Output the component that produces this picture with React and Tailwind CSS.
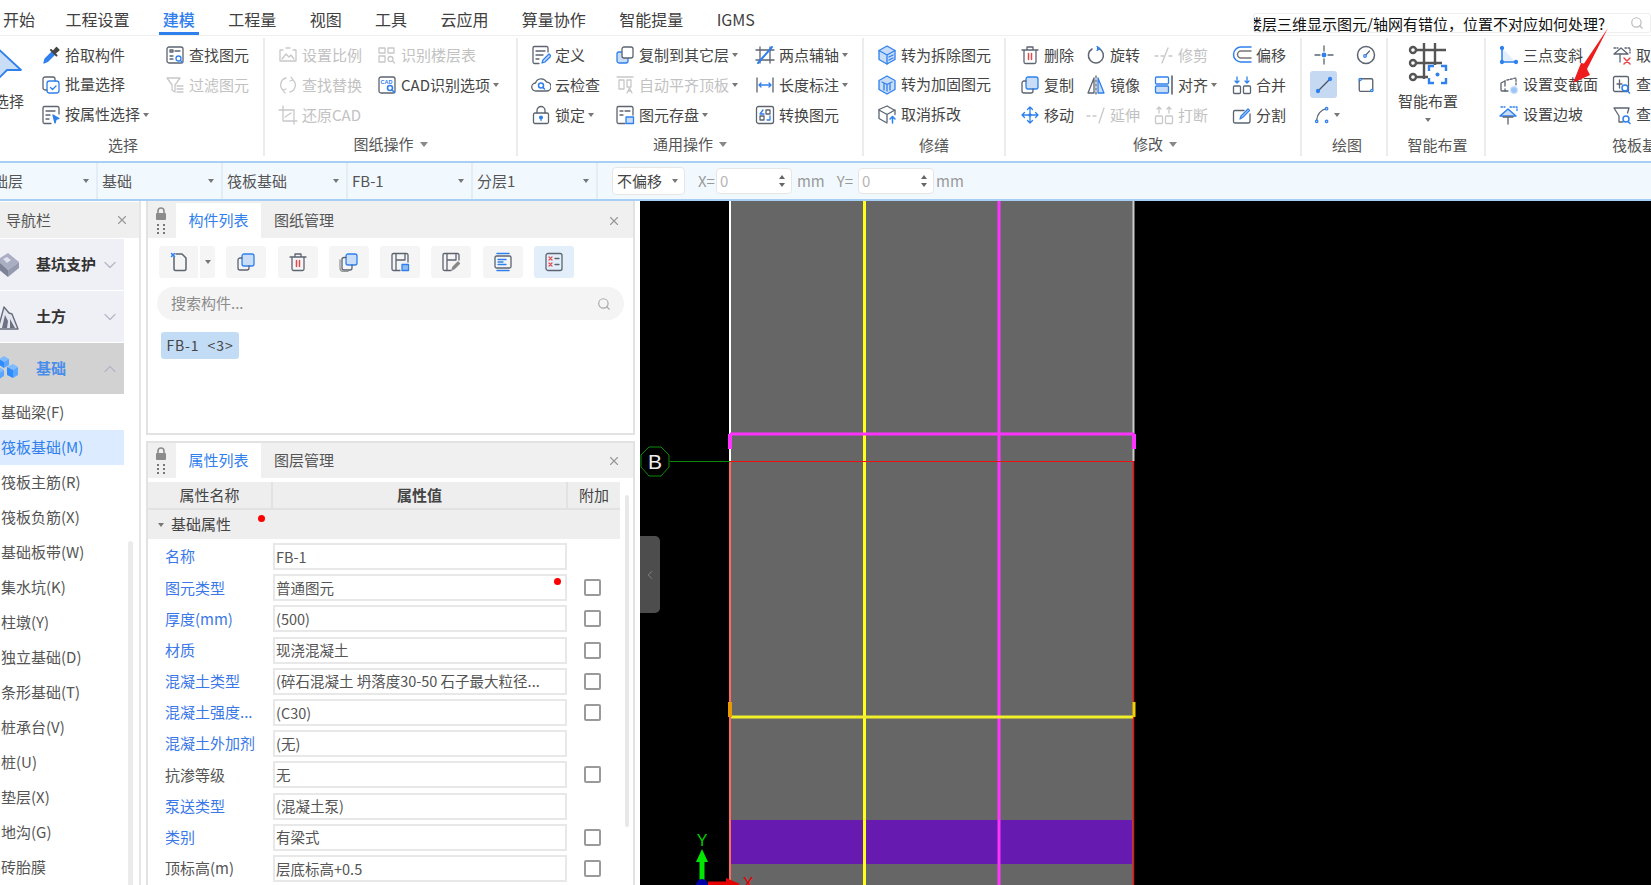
import React from "react";
import { ChevronDown, ChevronLeft, ChevronUp, Search, X } from "lucide-react";

const B = "#2f80ed";
const L = "#c9ddf6";

const Svg = ({ size = 20, children, className = "" }) => (
  <svg width={size} height={size} viewBox="0 0 20 20" fill="none" stroke="currentColor" strokeWidth="1.3" strokeLinecap="round" strokeLinejoin="round" className={`shrink-0 ${className}`}>
    {children}
  </svg>
);

const icons = {
  pick: <><path d="M3 18l1-4 7-7 2.500 2.500-7 7z" fill={B} stroke={B} /><path d="M10 5l5.500 5.500" strokeWidth="2" stroke="#444" /><path d="M12.500 6l3-3.500 2.500 2.500-3.500 3z" fill="#444" stroke="#444" /></>,
  batch: <><path d="M6 15H4a2 2 0 0 1-2-2V4a2 2 0 0 1 2-2h8a2 2 0 0 1 2 2v2" /><rect x="6" y="6" width="12" height="12" rx="2.500" stroke={B} /><path d="M9.500 12.500l2 2 3.500-3.500" stroke={B} /></>,
  attr: <><path d="M18 9V3a1.500 1.500 0 0 0-1.500-1.500h-13A1.500 1.500 0 0 0 2 3v14a1.500 1.500 0 0 0 1.500 1.500H10" /><path d="M5 6h9M5 10h4M5 14h3" /><path d="M12 10l6 3.500-3 1-1 3.500z" fill={B} stroke={B} /></>,
  find: <><rect x="2" y="2" width="16" height="16" rx="2" /><path d="M10 6h5M5 11h3M5 14h3" /><rect x="5" y="5" width="3" height="2" /><circle cx="13.500" cy="13.500" r="2.500" stroke={B} /><path d="M15.500 15.500l2 2" stroke={B} /></>,
  filter: <><path d="M2 3h13l-5 7v7l-3-2v-5z" /><path d="M12 11h6M12 14h6M12 17h6" /></>,
  scale: <><path d="M2 5h3M8 3h4M15 5h3M2 5v11M18 5v11M2 16h16" /><path d="M4 14l4-5 3 3 2-2 3 4" /></>,
  floor: <><path d="M2 3h6v5H2zM11 3h6v5h-6zM2 11h6v6H2z" /><circle cx="13.500" cy="14" r="2.500" /><path d="M15.500 16l2 2" /></>,
  swap: <><path d="M8 3a7 7 0 0 0-3 12" /><path d="M12 17a7 7 0 0 0 3-12" /><path d="M13 2l2 3-3 1M7 18l-2-3 3-1" /></>,
  cad: <><rect x="2" y="2" width="16" height="16" rx="2" /><text x="3.500" y="9" fontSize="5.500" fontWeight="700" fill={B} stroke="none" fontFamily="Liberation Sans">CAD</text><circle cx="13" cy="13" r="2.500" stroke={B} strokeWidth="1.600" /><path d="M15 15l2.500 2.500" stroke={B} strokeWidth="1.600" /></>,
  crop: <><path d="M5 1v15h14M1 5h15v14" /><path d="M7 12l6-4" /></>,
  define: <><path d="M17 7V3a1.500 1.500 0 0 0-1.500-1.500h-12A1.500 1.500 0 0 0 2 3v14a1.500 1.500 0 0 0 1.500 1.500H8" /><path d="M5 6h9M5 10h7M5 14h3" /><path d="M11 18l1-3 6-6 2 2-6 6z" stroke={B} fill={L} /></>,
  cloud: <><path d="M5 16a4 4 0 0 1-.500-8 6 6 0 0 1 11-1 4.500 4.500 0 0 1 0 9z" /><circle cx="10" cy="10.500" r="2.500" stroke={B} strokeWidth="1.500" /><path d="M12 12.500l1.500 1.500" stroke={B} strokeWidth="1.500" /></>,
  lock: <><rect x="2.500" y="8" width="15" height="10.500" rx="1.500" /><path d="M6 8V5.500a4 4 0 0 1 8 0V8" /><circle cx="10" cy="12.500" r="1.400" fill={B} stroke={B} /><path d="M10 13v2.500" stroke={B} /></>,
  copyTo: <><rect x="2" y="7" width="11" height="11" rx="2" fill={L} stroke={B} /><rect x="7" y="2" width="11" height="11" rx="2" fill="#fff" /></>,
  auto: <><path d="M2 2h16M4 5h5v9H4zM12 5h4v7h-4z" /><path d="M12 18l2.500-5 2.500 5M13 16h3" /></>,
  save: <><path d="M18 10V3a1.500 1.500 0 0 0-1.500-1.500h-13A1.500 1.500 0 0 0 2 3v14a1.500 1.500 0 0 0 1.500 1.500H10" /><path d="M5 6h3M10 6h5M5 10h3" /><rect x="11" y="12" width="7.500" height="6.500" fill={L} stroke={B} /></>,
  two: <><path d="M5 2v16M15 2v16M1 5h18M1 15h18" /><path d="M3 18L17 2" stroke={B} strokeWidth="2" /></>,
  length: <><path d="M2 3v14M18 3v14" /><path d="M4 10h12M6 8l-2 2 2 2M14 8l2 2-2 2" stroke={B} /></>,
  convert: <><rect x="1.500" y="1.500" width="17" height="17" rx="2" /><path d="M11 5h4v4h-4zM5 11h4v4H5z" /><path d="M15 11v4h-3" stroke={B} /><path d="M8 5L5 9h4" stroke={B} /></>,
  demo: <><path d="M10 1l8 4.500v9L10 19l-8-4.500v-9z" stroke={B} fill={L} /><path d="M10 10V19M10 10L2 5.500M10 10l8-4.500" stroke={B} /><path d="M12 12l4-2M12 15l4-2" stroke={B} /></>,
  reinf: <><path d="M10 1l8 4.500v9L10 19l-8-4.500v-9z" stroke={B} fill={L} /><path d="M5 7l5 2.500L15 7M10 9.500V16M7 9v6M13 9v6" stroke={B} /></>,
  undo: <><path d="M10 18l-8-4.500v-9L10 1l8 4.500v4" /><path d="M2 5l8 4.500 8-4.500M10 9.500V17" /><path d="M13 14l2.500-2.500L18 14M15.500 12v6" stroke={B} strokeWidth="1.500" /></>,
  trash: <><path d="M2 5h16M7 5V2h6v3M4 5v12a1.500 1.500 0 0 0 1.500 1.500h9A1.500 1.500 0 0 0 16 17V5" /><path d="M8.500 8.500v6M11.500 8.500v6" stroke="#e5484d" strokeWidth="1.500" /></>,
  copy: <><rect x="6" y="2" width="12" height="12" rx="2" fill={L} stroke={B} /><path d="M6 6H4a2 2 0 0 0-2 2v8a2 2 0 0 0 2 2h7a2 2 0 0 0 2-2v-2" /></>,
  move: <g stroke={B}><path d="M10 2v16M2 10h16M7.500 4.500L10 2l2.500 2.500M7.500 15.500L10 18l2.500-2.500M4.500 7.500L2 10l2.500 2.500M15.500 7.500L18 10l-2.500 2.500" /><circle cx="10" cy="10" r="1" fill={B} /></g>,
  rotate: <><path d="M13 3.600A7.500 7.500 0 1 1 6 4" strokeWidth="1.500" /><path d="M11 1.500l3 2-3 2" stroke={B} fill={B} /></>,
  mirror: <><path d="M8 3L2 18h6z" /><path d="M12 3l6 15h-6z" stroke={B} fill={L} /><path d="M10 1v18" strokeDasharray="2 2" /></>,
  trim: <><path d="M1 11h3M7 11h3M15 11h3" /><path d="M14 3l-6 15" /></>,
  extend: <><path d="M1 11h3M7 11h3" /><path d="M18 3l-5 15" /></>,
  align: <><rect x="1.500" y="2" width="13" height="7" rx="1" stroke={B} /><rect x="1.500" y="11" width="13" height="7" rx="1" stroke={B} fill={L} /><path d="M18 1v18" strokeWidth="1.600" /></>,
  offset: <g stroke={B} strokeWidth="1.500"><path d="M19 2H9a7 7 0 0 0 0 15h10" /><path d="M19 6H9a3.500 3.500 0 0 0 0 7h10" stroke="#777" /></g>,
  merge: <><rect x="1.500" y="11" width="7" height="7.500" rx="1" /><rect x="11.500" y="11" width="7" height="7.500" rx="1" /><path d="M5 2v6M3 6l2 2 2-2M15 2v6M13 6l2 2 2-2" stroke={B} /></>,
  brk: <><rect x="1.500" y="11" width="7" height="7.500" rx="1" /><rect x="11.500" y="11" width="7" height="7.500" rx="1" /><path d="M5 8V2M3 4l2-2 2 2M15 8V2M13 4l2-2 2 2" /></>,
  split: <><path d="M18 9v7a2 2 0 0 1-2 2H3a1.500 1.500 0 0 1-1.500-1.500V7A1.500 1.500 0 0 1 3 5.500h9" /><path d="M8 14l1-3 7-7 1.500 1.500-7 7z" stroke={B} fill={L} /></>,
  point: <><path d="M10 1v5M10 14v5M1 10h5M14 10h5" /><circle cx="10" cy="10" r="1.800" fill={B} stroke={B} /></>,
  circle: <><circle cx="10" cy="10" r="8.500" strokeWidth="1.500" /><path d="M9 11l4.500-5" strokeWidth="1.200" /><circle cx="9" cy="11" r="1.300" fill="#fff" stroke={B} /></>,
  line: <g stroke={B}><path d="M4.500 15.500l11-11" strokeWidth="1.400" stroke="#4a5568" /><circle cx="4" cy="16" r="1.500" fill={B} /><circle cx="16" cy="4" r="1.500" fill={B} /></g>,
  rect: <><rect x="2.500" y="3" width="15" height="14" rx="1.500" strokeWidth="1.500" /><circle cx="3.500" cy="4" r="1.300" fill={L} stroke={B} /><circle cx="16.500" cy="16" r="1.300" fill={L} stroke={B} /></>,
  arc: <><path d="M3 17C3 9 8 4 14 3" /><circle cx="3" cy="17" r="1.400" fill={L} stroke={B} /><circle cx="14" cy="3" r="1.400" fill={L} stroke={B} /><circle cx="14" cy="17" r="1.400" fill={L} stroke={B} /></>,
  three: <><path d="M3 17V3l14 14z" fill="#e3effc" stroke="none" /><path d="M3 3v14h14" stroke={B} strokeWidth="1.500" /><circle cx="3" cy="3" r="1.500" fill={B} stroke={B} /><circle cx="3" cy="17" r="1.500" fill={B} stroke={B} /><circle cx="17" cy="17" r="1.500" fill={B} stroke={B} /></>,
  variable: <><path d="M9 16H3a1 1 0 0 1-1-1V8l4-2" /><path d="M6 6v5M6 14v2" /><path d="M8 5l9-2v7" strokeDasharray="2 1.500" /><circle cx="15" cy="15" r="3.500" fill="#9cc4f5" stroke="#cfe2fa" /></>,
  slope: <><path d="M1 11L9 4l8 7z" stroke={B} fill={L} strokeWidth="1.500" /><path d="M4 12h10M9 12v7" /><path d="M2 2h4M11 2h7v5" strokeDasharray="1.500 1.500" stroke={B} /></>,
  cancelTop: <><path d="M2 9l7-6 7 6z" /><path d="M2 3h4M13 3h5v5" strokeDasharray="1.500 1.500" /><path d="M8 9v8" /><path d="M12 13l6 6M18 13l-6 6" stroke="#e5484d" strokeWidth="1.500" /></>,
  query: <><rect x="1.500" y="1.500" width="15" height="15" rx="1.500" /><path d="M5 9h5M7.500 5v8" /><circle cx="13" cy="13" r="3" stroke={B} strokeWidth="1.500" /><path d="M15 15.500l2.500 2.500" stroke={B} strokeWidth="1.500" /></>,
  queryF: <><path d="M2 3h15l-1.500 5M2 3l5 8v6h4" /><circle cx="14" cy="14" r="3" stroke={B} strokeWidth="1.500" /><path d="M16 16.500l2 2" stroke={B} strokeWidth="1.500" /></>,
  newDoc: <><path d="M5 5v12a1.500 1.500 0 0 0 1.500 1.500h9A1.500 1.500 0 0 0 17 17V6l-4-4H7" strokeWidth="1.500" /><path d="M2.500 1.500l3 3M5.500 1.500l-3 3" stroke={B} strokeWidth="1.500" /></>,
  copy2: <><rect x="7" y="2" width="11" height="11" rx="2" fill={L} stroke={B} /><path d="M7 5.500H5a2 2 0 0 0-2 2V16a2 2 0 0 0 2 2h6a2 2 0 0 0 2-2v-3" /><path d="M1 8v8a3.500 3.500 0 0 0 3 3.500h5" stroke="#999" /></>,
  saveDoc: <><path d="M18 10V3a1.500 1.500 0 0 0-1.500-1.500h-13A1.500 1.500 0 0 0 2 3v14a1.500 1.500 0 0 0 1.500 1.500H10" /><path d="M6 2v16M15 2v6M6 8h9" /><rect x="12" y="12.500" width="6.500" height="6" fill="#8dbcf5" stroke={B} /></>,
  editDoc: <><path d="M18 8V3a1.500 1.500 0 0 0-1.500-1.500h-13A1.500 1.500 0 0 0 2 3v14a1.500 1.500 0 0 0 1.500 1.500H10" /><path d="M6 2v16M15 2v6M6 8h9" /><path d="M11 18l1-3 5-5 1.500 1.500-5 5z" fill="#888" stroke="#888" /></>,
  listBox: <><path d="M4 1.500h12M4 18.500h12" stroke={B} strokeWidth="1.500" /><rect x="2" y="4" width="16" height="12" rx="1.500" /><path d="M5 7.500h8M5 10h5M5 12.500h8" stroke={B} /></>,
  xList: <><rect x="2" y="1.500" width="16" height="17" rx="2" /><path d="M5 5l3 3M8 5l-3 3M5 11l3 3M8 11l-3 3" stroke="#e5484d" strokeWidth="1.200" /><path d="M11 6.500h4M11 12.500h4" /></>,
};

const Caret = ({ className = "ml-[6px]" }) => (
  <span className={`inline-block w-0 h-0 border-x-[3px] border-x-transparent border-t-[4px] border-t-[#777] shrink-0 ${className}`} />
);

const Item = ({ icon, label, off, caret, iconW = 20 }) => (
  <div className={`h-[30px] flex items-center gap-[4px] whitespace-nowrap ${off ? "text-[#c2c2c2]" : "text-[#454545]"}`}>
    <Svg className={off ? "text-[#c8c8c8]" : "text-[#5c6470]"} size={iconW}>{icons[icon]}</Svg>
    <span>{label}</span>
    {caret && <Caret className="-ml-px" />}
  </div>
);

const Col = ({ w, items }) => (
  <div className={`flex flex-col shrink-0 ${w}`}>
    {items.map((it) => (
      <Item key={it.label} {...it} />
    ))}
  </div>
);

const Group = ({ w, label, caret, pad = "", labelPos = "justify-center", children, last }) => (
  <div className={`h-[118px] mt-[2px] pt-[2px] shrink-0 flex flex-col ${w} ${last ? "" : "border-r-2 border-[#ececec]"}`}>
    <div className={`flex h-[92px] overflow-hidden ${pad}`}>{children}</div>
    <div className={`flex-1 flex items-center text-[#555] ${caret ? "" : "pt-[4px]"} ${labelPos}`}>
      <span className="whitespace-nowrap">{label}</span>
      {caret && <span className="ml-[6px] w-0 h-0 border-x-[4px] border-x-transparent border-t-[5px] border-t-[#888]" />}
    </div>
  </div>
);

const tabs = ["开始", "工程设置", "建模", "工程量", "视图", "工具", "云应用", "算量协作", "智能提量", "IGMS"];

const Ribbon = () => (
  <div className="flex h-[125px] overflow-hidden text-[15px]">
    <Group w="w-[265px]" label="选择" labelPos="justify-start pl-[108px]">
      <div className="w-[41px] shrink-0 relative">
        <svg width="26" height="40" viewBox="0 0 26 40" className="mt-[7px] overflow-visible">
          <path d="M-8 -4L21 23H7L-3 33z" fill={L} stroke={B} strokeWidth="1.800" strokeLinejoin="round" />
        </svg>
        <span className="absolute left-[-6px] top-[50px] text-[#454545] whitespace-nowrap">选择</span>
      </div>
      <Col w="w-[124px]" items={[{ icon: "pick", label: "拾取构件" }, { icon: "batch", label: "批量选择" }, { icon: "attr", label: "按属性选择", caret: true }]} />
      <Col w="w-[95px]" items={[{ icon: "find", label: "查找图元" }, { icon: "filter", label: "过滤图元", off: true }]} />
    </Group>
    <Group w="w-[253px]" label="图纸操作" caret pad="pl-[13px]">
      <Col w="w-[99px]" items={[{ icon: "scale", label: "设置比例", off: true }, { icon: "swap", label: "查找替换", off: true }, { icon: "crop", label: "还原CAD", off: true }]} />
      <Col w="w-[135px]" items={[{ icon: "floor", label: "识别楼层表", off: true }, { icon: "cad", label: "CAD识别选项", caret: true }]} />
    </Group>
    <Group w="w-[346px]" label="通用操作" caret pad="pl-[13px]">
      <Col w="w-[84px]" items={[{ icon: "define", label: "定义" }, { icon: "cloud", label: "云检查" }, { icon: "lock", label: "锁定", caret: true }]} />
      <Col w="w-[140px]" items={[{ icon: "copyTo", label: "复制到其它层", caret: true }, { icon: "auto", label: "自动平齐顶板", off: true, caret: true }, { icon: "save", label: "图元存盘", caret: true }]} />
      <Col w="w-[105px]" items={[{ icon: "two", label: "两点辅轴", caret: true }, { icon: "length", label: "长度标注", caret: true }, { icon: "convert", label: "转换图元" }]} />
    </Group>
    <Group w="w-[142px]" label="修缮" pad="pl-[13px]">
      <Col w="w-[125px]" items={[{ icon: "demo", label: "转为拆除图元" }, { icon: "reinf", label: "转为加固图元" }, { icon: "undo", label: "取消拆改" }]} />
    </Group>
    <Group w="w-[296px]" label="修改" caret pad="pl-[14px]" labelPos="justify-center pl-[4px]">
      <Col w="w-[66px]" items={[{ icon: "trash", label: "删除" }, { icon: "copy", label: "复制" }, { icon: "move", label: "移动" }]} />
      <Col w="w-[68px]" items={[{ icon: "rotate", label: "旋转" }, { icon: "mirror", label: "镜像" }, { icon: "extend", label: "延伸", off: true }]} />
      <Col w="w-[78px]" items={[{ icon: "trim", label: "修剪", off: true }, { icon: "align", label: "对齐", caret: true }, { icon: "brk", label: "打断", off: true }]} />
      <Col w="w-[60px]" items={[{ icon: "offset", label: "偏移" }, { icon: "merge", label: "合并" }, { icon: "split", label: "分割" }]} />
    </Group>
    <Group w="w-[86px]" label="绘图" pad="pl-[8px]" labelPos="justify-center pl-[6px]">
      <div className="flex flex-col w-[42px] text-[#5c6470]">
        <div className="w-[27px] h-[30px] flex items-center justify-center"><Svg>{icons.point}</Svg></div>
        <div className="w-[27px] h-[27px] my-[1.500px] rounded-[3px] bg-[#c5daf2] flex items-center justify-center"><Svg>{icons.line}</Svg></div>
        <div className="w-[27px] h-[30px] flex items-center justify-center gap-[2px]"><Svg size={18}>{icons.arc}</Svg><Caret className="-mr-[6px]" /></div>
      </div>
      <div className="flex flex-col w-[27px] text-[#5c6470]">
        <div className="w-[27px] h-[30px] flex items-center justify-center"><Svg>{icons.circle}</Svg></div>
        <div className="w-[27px] h-[30px] flex items-center justify-center"><Svg size={18}>{icons.rect}</Svg></div>
      </div>
    </Group>
    <Group w="w-[98px]" label="智能布置" labelPos="justify-center pl-[3px]">
      <div className="w-full pr-[16px] flex flex-col items-center text-[#454545]">
        <svg width="40" height="42" viewBox="0 0 40 42" fill="none" className="mt-[3px] shrink-0">
          <g stroke="#555" strokeWidth="2.400">
            <path d="M8 7h30M8 20h26M8 34h12M16 0v36M27 0v22" />
            <circle cx="5" cy="7" r="3" fill="#fff" />
            <circle cx="5" cy="20" r="3" fill="#fff" />
            <circle cx="5" cy="34" r="3" fill="#fff" />
          </g>
          <path d="M21 28v-5h5M33 23h5v5M38 35v5h-5M26 40h-5v-5" stroke={B} strokeWidth="2.400" />
          <circle cx="29.500" cy="31.500" r="2" fill={B} />
        </svg>
        <span className="mt-[5px] leading-[22px] whitespace-nowrap">智能布置</span>
        <Caret className="mt-[6px]" />
      </div>
    </Group>
    <Group w="w-[165px]" label="筏板基础" pad="pl-[13px]" labelPos="justify-start pl-[126px]" last>
      <Col w="w-[113px]" items={[{ icon: "three", label: "三点变斜" }, { icon: "variable", label: "设置变截面" }, { icon: "slope", label: "设置边坡" }]} />
      <Col w="w-[60px]" items={[{ icon: "cancelTop", label: "取消" }, { icon: "query", label: "查询" }, { icon: "queryF", label: "查询" }]} />
    </Group>
  </div>
);

const Cell = ({ w, children, clip }) => (
  <div className={`h-full flex items-center justify-between pl-[4px] pr-[7px] border-r-2 border-[#e3edf5] whitespace-nowrap ${w} ${clip ? "overflow-hidden" : ""}`}>
    <span>{children}</span>
    <Caret className="" />
  </div>
);

const Spin = () => (
  <div className="h-[26px] w-[76px] rounded-[4px] bg-white border border-[#e6e6e6] flex items-center justify-between pl-[3px] pr-[6px] text-[#b5b5b5]">
    <span>0</span>
    <span className="flex flex-col gap-[4px]">
      <span className="w-0 h-0 border-x-[3px] border-x-transparent border-b-[4px] border-b-[#666]" />
      <span className="w-0 h-0 border-x-[3px] border-x-transparent border-t-[4px] border-t-[#666]" />
    </span>
  </div>
);

const OptionBar = () => (
  <div className="h-[40px] flex items-center bg-[#f2f9fe] border-y-2 border-[#a6cff3] text-[15px] text-[#555]">
    <Cell w="w-[98px] -indent-[26px]" clip>基础层</Cell>
    <Cell w="w-[125px]">基础</Cell>
    <Cell w="w-[125px]">筏板基础</Cell>
    <Cell w="w-[125px]">FB-1</Cell>
    <Cell w="w-[125px]">分层1</Cell>
    <div className="h-[28px] w-[73px] ml-[14px] rounded-[4px] bg-white border border-[#e6e6e6] flex items-center justify-between pl-[4px] pr-[6px] text-[#444]">
      <span>不偏移</span>
      <Caret className="" />
    </div>
    <span className="ml-[13px] mr-[1px] text-[#999]">X=</span>
    <Spin />
    <span className="ml-[5px] text-[#999]">mm</span>
    <span className="ml-[12px] mr-[5px] text-[#999]">Y=</span>
    <Spin />
    <span className="ml-[2px] text-[#999]">mm</span>
  </div>
);

const NavIcon = ({ kind }) => {
  if (kind === "pit")
    return (
      <svg width="20" height="30" viewBox="0 0 20 30" className="shrink-0">
        <path d="M-3 10L8 3l11 9-11 8z" fill="#a9aec2" />
        <path d="M-3 10v8l11 9v-7z" fill="#7d8296" />
        <path d="M19 12v6l-11 9v-7z" fill="#959ab0" />
        <path d="M3 9l4-2 4 3-4 3z" fill="#dfe2ea" />
      </svg>
    );
  if (kind === "earth")
    return (
      <svg width="20" height="28" viewBox="0 0 20 28" className="shrink-0">
        <path d="M-2 26L4 4l5 6 3 1 6 15z" fill="#e4e6ee" stroke="#676c7e" strokeWidth="1.400" strokeLinejoin="round" />
        <path d="M2 25l3-13 3 6-1 7M10 25l0-9 5 9" fill="#6b7082" />
      </svg>
    );
  return (
    <svg width="20" height="30" viewBox="0 0 20 30" className="shrink-0">
      <path d="M-1 5l5-3 5 3-5 3z" fill="#7dbaff" /><path d="M-1 5v6l5 3V8z" fill="#2f8cff" /><path d="M9 5v6l-5 3V8z" fill="#5aa6ff" />
      <path d="M-6 16l5-3 5 3-5 3z" fill="#7dbaff" /><path d="M-6 16v6l5 3v-6z" fill="#2f8cff" /><path d="M4 16v6l-5 3v-6z" fill="#5aa6ff" />
      <path d="M7 13l6-3 5 3-5 3z" fill="#7dbaff" /><path d="M7 13v8l6 3v-8z" fill="#2f8cff" /><path d="M18 13v8l-5 3v-8z" fill="#5aa6ff" />
    </svg>
  );
};

const navList = ["基础梁(F)", "筏板基础(M)", "筏板主筋(R)", "筏板负筋(X)", "基础板带(W)", "集水坑(K)", "柱墩(Y)", "独立基础(D)", "条形基础(T)", "桩承台(V)", "桩(U)", "垫层(X)", "地沟(G)", "砖胎膜"];

const NavGroup = ({ kind, label, open }) => {
  const Chev = open ? ChevronUp : ChevronDown;
  return (
    <div className={`h-[51px] flex items-center ${open ? "bg-[#d2d2d2] text-[#4a8eea]" : "bg-[#eff0f5]"}`}>
      <NavIcon kind={kind} />
      <span className="ml-[16px] whitespace-nowrap">{label}</span>
      <Chev size={20} strokeWidth={1.5} className="text-[#b4b8c6] ml-auto mr-[4px] shrink-0" />
    </div>
  );
};

const Nav = () => (
  <div className="w-[141px] shrink-0 border-r-2 border-[#e6e6e6] flex flex-col h-full overflow-hidden text-[15px] text-[#555]">
    <div className="h-[36px] mt-px bg-[#efefef] flex items-center justify-between pl-[6px] pr-[10px]">
      <span>导航栏</span>
      <X size={14} className="text-[#999]" />
    </div>
    <div className="mt-px w-[124px] flex flex-col gap-px text-[#333] font-bold">
      <NavGroup kind="pit" label="基坑支护" />
      <NavGroup kind="earth" label="土方" />
      <NavGroup kind="found" label="基础" open />
    </div>
    <div className="relative pt-[1px]">
      {navList.map((n, i) => (
        <div key={n} className={`h-[35px] w-[124px] flex items-center pl-[1px] whitespace-nowrap ${i === 1 ? "bg-[#dcebff] text-[#2f80ed]" : ""}`}>
          {n}
        </div>
      ))}
      <div className="absolute left-[128px] top-[147px] w-[5px] h-[400px] bg-[#ebebeb] rounded" />
    </div>
  </div>
);

const Lock = () => (
  <svg width="14" height="30" viewBox="0 0 14 30" className="shrink-0">
    <path d="M4 7V5a3 3 0 0 1 6 0v2" fill="none" stroke="#8b8b8b" strokeWidth="1.600" />
    <rect x="2" y="7" width="10" height="7" rx="1" fill="#8b8b8b" />
    <g fill="#777">
      <rect x="3" y="18" width="2" height="2" /><rect x="9" y="18" width="2" height="2" />
      <rect x="3" y="22" width="2" height="2" /><rect x="9" y="22" width="2" height="2" />
      <rect x="3" y="26" width="2" height="2" /><rect x="9" y="26" width="2" height="2" />
    </g>
  </svg>
);

const PanelHead = ({ a, b, top }) => (
  <div className={`bg-[#f0f0f1] flex items-stretch pl-[6px] pr-[12px] text-[15px] shrink-0 ${top ? "h-[37px] pt-[2px]" : "h-[35px]"}`}>
    <div className="flex items-center w-[22px]"><Lock /></div>
    <div className="bg-white flex items-center justify-center w-[85px] text-[#2f80ed]">{a}</div>
    <div className="flex items-center ml-[13px] text-[#555]">{b}</div>
    <X size={14} className="ml-auto self-center text-[#999]" />
  </div>
);

const tools = ["copy", "trash", "copy2", "saveDoc", "editDoc", "listBox", "xList"];

const rows = [
  { k: "名称", v: "FB-1", blue: true, nocb: true },
  { k: "图元类型", v: "普通图元", blue: true, dot: true },
  { k: "厚度(mm)", v: "(500)", blue: true },
  { k: "材质", v: "现浇混凝土", blue: true },
  { k: "混凝土类型", v: "(碎石混凝土 坍落度30-50 石子最大粒径...", blue: true },
  { k: "混凝土强度...", v: "(C30)", blue: true },
  { k: "混凝土外加剂", v: "(无)", blue: true, nocb: true },
  { k: "抗渗等级", v: "无" },
  { k: "泵送类型", v: "(混凝土泵)", blue: true, nocb: true },
  { k: "类别", v: "有梁式", blue: true },
  { k: "顶标高(m)", v: "层底标高+0.5" },
];

const Panels = () => (
  <div className="w-[489px] shrink-0 ml-[5px] flex flex-col h-full">
    <div className="h-[234px] shrink-0 border-2 border-t-0 border-[#e2e2e2] flex flex-col">
      <PanelHead a="构件列表" b="图纸管理" top />
      <div className="flex gap-[11.250px] pl-[11px] pt-[8px] text-[#5c6470]">
        <div className="w-[56px] h-[32px] bg-[#f5f5f5] rounded-[3px] flex items-center">
          <div className="w-[41px] flex justify-center border-r-2 border-white h-full items-center"><Svg>{icons.newDoc}</Svg></div>
          <Caret className="ml-[5px]" />
        </div>
        {tools.map((t, i) => (
          <div key={t} className={`w-[40px] h-[32px] rounded-[3px] flex items-center justify-center ${i === 6 ? "bg-[#e3eefb]" : "bg-[#f5f5f5]"}`}>
            <Svg>{icons[t]}</Svg>
          </div>
        ))}
      </div>
      <div className="mx-[9px] mt-[9px] h-[33px] rounded-full bg-[#f4f4f4] flex items-center justify-between pl-[14px] pr-[13px] text-[15px] text-[#8c8c8c]">
        <span>搜索构件...</span>
        <Search size={14} className="text-[#aaa]" />
      </div>
      <div className="ml-[13px] mt-[12px] w-[78px] h-[27px] rounded-[3px] bg-[#c3dcf5] flex items-center justify-center text-[14px] text-[#444] tracking-[0.9px] whitespace-pre">
        FB-1  {"<3>"}
      </div>
    </div>
    <div className="mt-[6px] flex-1 border-x-2 border-[#e2e2e2] border-t-2 flex flex-col overflow-hidden">
      <PanelHead a="属性列表" b="图层管理" />
      <div className="flex flex-1">
        <div className="w-[472px] shrink-0 pt-[4px] text-[15px]">
          <div className="h-[28px] flex bg-[#eeeeee] border-b-2 border-[#e2e2e2] text-[#444]">
            <div className="w-[125px] border-r-2 border-[#e2e2e2] flex items-center justify-center">属性名称</div>
            <div className="w-[295px] border-r-2 border-[#e2e2e2] flex items-center justify-center font-bold">属性值</div>
            <div className="flex-1 flex items-center justify-center">附加</div>
          </div>
          <div className="h-[29px] bg-[#eeeeee] flex items-center pl-[10px] text-[#444]">
            <Caret className="mr-[7px]" />
            基础属性
            <span className="ml-[27px] -mt-[12px] w-[7px] h-[7px] rounded-full bg-[#f00]" />
          </div>
          <div className="pt-[2px]">
            {rows.map((r) => (
              <div key={r.k} className="h-[31.200px] flex items-center">
                <div className={`w-[125px] pl-[17px] whitespace-nowrap ${r.blue ? "text-[#3b78e7]" : "text-[#555]"}`}>{r.k}</div>
                <div className="relative w-[294px] h-[27px] border-2 border-[#e8e8e8] flex items-center pl-[1px] text-[14.500px] text-[#555] whitespace-nowrap">
                  {r.v}
                  {r.dot && <span className="absolute right-[4px] top-[2px] w-[7px] h-[7px] rounded-full bg-[#f00]" />}
                </div>
                {!r.nocb && <div className="ml-[17px] w-[17px] h-[17px] rounded-[2px] border-2 border-[#9a9a9a] bg-white" />}
              </div>
            ))}
          </div>
        </div>
        <div className="ml-[5px] mt-[17px] w-[4px] h-[332px] bg-[#e8e8e8] rounded" />
      </div>
    </div>
  </div>
);

// CAD view, coordinates are page pixels through the viewBox
const Canvas = () => (
  <div className="relative flex-1 bg-black ml-[5px] h-full overflow-hidden">
    <svg width="1011" height="684" viewBox="640 201 1011 684" className="block">
      <rect x="730" y="201" width="404" height="684" fill="#666" />
      <path d="M730 201v260" stroke="#fff" strokeWidth="2" />
      <path d="M1133.500 201v260" stroke="#ccc" strokeWidth="2" />
      <path d="M730 461v424" stroke="#ff6a5c" strokeWidth="2" />
      <path d="M1133.500 461v424" stroke="#f01010" strokeWidth="1.500" />
      <rect x="731" y="820" width="401" height="44" fill="#661ab0" />
      <path d="M864.500 201v684" stroke="#ffff1a" strokeWidth="3" />
      <path d="M999 201v684" stroke="#ff33ff" strokeWidth="3" />
      <path d="M731 717h402" stroke="#f0f02a" strokeWidth="3" />
      <path d="M730 702v15" stroke="#e89a00" strokeWidth="4" />
      <path d="M1134 702v15" stroke="#f0d000" strokeWidth="3" />
      <path d="M730 434h404" stroke="#ff33ff" strokeWidth="3" />
      <path d="M730 434v15M1134 434v15" stroke="#ff33ff" strokeWidth="4" />
      <path d="M670 461.500h60" stroke="#0a8a0a" strokeWidth="1" />
      <path d="M730 461.500h404" stroke="#f01010" strokeWidth="1" />
      <path d="M649 447h12l8 8v12l-8 9h-12l-8-9v-12z" fill="none" stroke="#0a8a0a" strokeWidth="1" />
      <text x="655" y="469" fill="#eee" fontSize="21" textAnchor="middle" fontFamily="Liberation Sans">B</text>
      <text x="702" y="846" fill="#00d000" fontSize="16" textAnchor="middle" fontFamily="Liberation Sans">Y</text>
      <path d="M702 882v-22" stroke="#00e600" strokeWidth="5" />
      <path d="M696 862l6-13 6 13z" fill="#00e600" />
      <path d="M708 884h24" stroke="#e60000" strokeWidth="5" />
      <path d="M726 878l14 6-14 6z" fill="#e60000" />
      <circle cx="702" cy="885" r="6" fill="#0000a8" />
      <text x="748" y="889" fill="#e60000" fontSize="16" textAnchor="middle" fontFamily="Liberation Sans">X</text>
    </svg>
    <div className="absolute left-0 top-[335px] w-[20px] h-[77px] bg-[#4d4d4d] rounded-r-[5px] flex items-center text-[#8a8a8a]">
      <ChevronLeft size={14} strokeWidth={1.5} className="ml-[3px]" />
    </div>
  </div>
);

export default function App() {
  return (
    <div className="relative w-[1651px] h-[885px] overflow-hidden bg-white font-['Noto_Sans_CJK_SC','Noto_Sans',sans-serif]">
      <div className="h-[36px] flex items-stretch border-b border-[#f0f0f0] text-[16px] text-[#404040] relative">
        <div className="flex items-stretch gap-[25.400px] -ml-px">
          {tabs.map((t, i) => (
            <div key={t} className={`flex items-center px-[4px] pt-[6px] border-b-[3px] whitespace-nowrap ${i === 2 ? "border-[#2f80ed] text-[#2f80ed] font-medium" : "border-transparent"} ${i === 0 ? "-mr-[3px]" : ""}`}>
              {t}
            </div>
          ))}
        </div>
        <div className="absolute left-[1253px] top-[13px] w-[398px] h-[20px] bg-white border border-[#eeeeee] rounded-[3px] flex items-center overflow-hidden text-[15px] text-[#111]">
          <span className="-ml-[7px] whitespace-nowrap leading-none">楼层三维显示图元/轴网有错位，位置不对应如何处理?</span>
          <Search size={14} className="absolute right-[6px] text-[#bbb]" />
        </div>
      </div>
      <Ribbon />
      <OptionBar />
      <div className="flex h-[684px]">
        <Nav />
        <Panels />
        <Canvas />
      </div>
      {/* red annotation arrow on top of the screenshot */}
      <svg width="50" height="70" viewBox="0 0 50 70" className="absolute left-[1567px] top-[22px]">
        <path d="M41 6L17 41.500 14 41 6 61 23 53 20 47z" fill="#ee1c1c" />
      </svg>
    </div>
  );
}
